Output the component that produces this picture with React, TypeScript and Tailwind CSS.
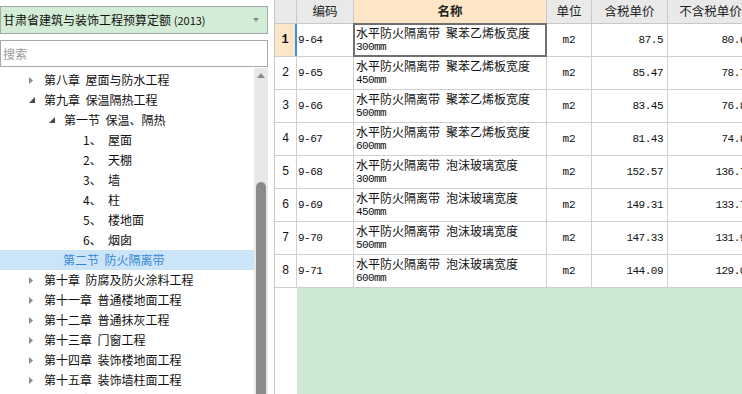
import React from 'react';

const cjk = '[font-family:"Noto_Sans_CJK_SC","Noto_Sans",sans-serif]';
const mono = '[font-family:"Liberation_Mono","DejaVu_Sans_Mono",monospace]';

type TreeItem = {
  level: 0 | 1 | 2;
  text: string;
  num?: string;
  open?: boolean;
  leaf?: boolean;
  selected?: boolean;
};

const tree: TreeItem[] = [
  { level: 0, text: '第八章  屋面与防水工程' },
  { level: 0, text: '第九章  保温隔热工程', open: true },
  { level: 1, text: '第一节  保温、隔热', open: true },
  { level: 2, num: '1', text: '屋面' },
  { level: 2, num: '2', text: '天棚' },
  { level: 2, num: '3', text: '墙' },
  { level: 2, num: '4', text: '柱' },
  { level: 2, num: '5', text: '楼地面' },
  { level: 2, num: '6', text: '烟囱' },
  { level: 1, text: '第二节  防火隔离带', leaf: true, selected: true },
  { level: 0, text: '第十章  防腐及防火涂料工程' },
  { level: 0, text: '第十一章  普通楼地面工程' },
  { level: 0, text: '第十二章  普通抹灰工程' },
  { level: 0, text: '第十三章  门窗工程' },
  { level: 0, text: '第十四章  装饰楼地面工程' },
  { level: 0, text: '第十五章  装饰墙柱面工程' },
  { level: 0, text: '第十六章  装饰天棚工程' },
];

const rows = [
  { code: '9-64', spec: '聚苯乙烯板宽度', w: '300mm', tax: '87.5', net: '80.61' },
  { code: '9-65', spec: '聚苯乙烯板宽度', w: '450mm', tax: '85.47', net: '78.72' },
  { code: '9-66', spec: '聚苯乙烯板宽度', w: '500mm', tax: '83.45', net: '76.83' },
  { code: '9-67', spec: '聚苯乙烯板宽度', w: '600mm', tax: '81.43', net: '74.84' },
  { code: '9-68', spec: '泡沫玻璃宽度', w: '300mm', tax: '152.57', net: '136.75' },
  { code: '9-69', spec: '泡沫玻璃宽度', w: '450mm', tax: '149.31', net: '133.73' },
  { code: '9-70', spec: '泡沫玻璃宽度', w: '500mm', tax: '147.33', net: '131.92' },
  { code: '9-71', spec: '泡沫玻璃宽度', w: '600mm', tax: '144.09', net: '129.04' },
];

const Caret: React.FC<{ open?: boolean }> = ({ open }) =>
  open ? (
    <svg width="6" height="6" viewBox="0 0 6 6">
      <path d="M6 0 L6 6 L0 6 Z" fill="#4a4a4a" />
    </svg>
  ) : (
    <svg width="4" height="7" viewBox="0 0 4 7">
      <path d="M0 0 L4 3.5 L0 7 Z" fill="#8c8c8c" />
    </svg>
  );

const TreeRow: React.FC<{ item: TreeItem }> = ({ item }) => {
  if (item.selected) {
    return (
      <div className="flex h-5 items-center whitespace-pre bg-[#cce4f7] pl-[63px] text-[#3a87d8]">{item.text}</div>
    );
  }
  if (item.level === 2) {
    return (
      <div className="flex h-5 items-center whitespace-pre pl-[83px] text-[#111]">
        <span className="w-[25px]">{item.num}、</span>
        <span>{item.text}</span>
      </div>
    );
  }
  const pad = item.level === 0 ? 'pl-[29px]' : 'pl-[49px]';
  return (
    <div className={`flex h-5 items-center whitespace-pre text-[#111] ${pad}`}>
      <span className="flex w-[15px] items-center">{!item.leaf && <Caret open={item.open} />}</span>
      <span>{item.text}</span>
    </div>
  );
};

const TreePanel: React.FC = () => (
  <div className="flex h-full w-[268px] flex-col">
    <div className="mt-[6px] flex h-[28px] items-center justify-between border border-[#a9a9a9] bg-[#d3ecd5] pl-[2px] pr-[8px]">
      <span className="whitespace-nowrap text-[12px] text-[#111]">
        甘肃省建筑与装饰工程预算定额 <span className="text-[11px]">(2013)</span>
      </span>
      <svg width="6" height="4" viewBox="0 0 6 4">
        <path d="M0 0 L6 0 L3 4 Z" fill="#8a8a8a" />
      </svg>
    </div>
    <div className="mt-[6px] flex h-[27px] items-center border border-[#a9a9a9] bg-white pl-[2px] text-[12px] text-[#9a9a9a]">
      搜索
    </div>
    <div className="mt-px flex min-h-0 flex-1">
      <div className="flex-1 overflow-hidden pt-[2px] text-[12px]">
        {tree.map((t, i) => (
          <TreeRow key={i} item={t} />
        ))}
      </div>
      <div className="flex w-[14px] flex-col items-center bg-[#e8e8e8]">
        <svg className="mt-[5px]" width="8" height="5" viewBox="0 0 8 5">
          <path d="M0 5 L4 0 L8 5 Z" fill="#8a8a8a" />
        </svg>
        <div className="mt-[104px] w-[10px] flex-1 rounded-t-full bg-[#8b8b8b]" />
      </div>
    </div>
  </div>
);

const HeadCell: React.FC<{ w: string; bold?: boolean; active?: boolean; children?: React.ReactNode }> = ({
  w,
  bold,
  active,
  children,
}) => (
  <div
    className={`flex h-full shrink-0 items-center justify-center border-r border-[#c9c9c9] text-[12.5px] text-[#222] ${w} ${
      active ? 'bg-[#fde5c6]' : 'bg-[#e9e9e9]'
    } ${bold ? 'font-bold' : ''}`}
  >
    {children}
  </div>
);

const Grid: React.FC = () => (
  <div className="ml-[6px] flex h-full flex-1 flex-col overflow-hidden border-l border-[#c4c4c4]">
    <div className="flex h-[24px] w-[600px] shrink-0 border-b border-[#c9c9c9]">
      <HeadCell w="w-[22px]" />
      <HeadCell w="w-[57px]">编码</HeadCell>
      <HeadCell w="w-[193px]" bold active>
        名称
      </HeadCell>
      <HeadCell w="w-[45px]">单位</HeadCell>
      <HeadCell w="w-[76px]">含税单价</HeadCell>
      <HeadCell w="w-[90px]">
        <span className="mr-[4px]">不含税单价</span>
      </HeadCell>
    </div>
    {rows.map((r, i) => {
      const first = i === 0;
      return (
        <div key={r.code} className="flex h-[33px] w-[600px] shrink-0 border-b border-[#cfcfcf] text-[#111]">
          <div
            className={`flex w-[22px] shrink-0 items-center justify-center text-[12px] ${mono} ${
              first ? 'border-r-2 border-[#3a8ee6] bg-[#fde6c8] font-bold' : 'border-r border-[#cfcfcf]'
            }`}
          >
            {i + 1}
          </div>
          <div className={`flex w-[57px] shrink-0 items-center border-r border-[#cfcfcf] pl-[1px] text-[11px] tracking-[-0.5px] ${mono}`}>
            {r.code}
          </div>
          <div className="relative flex w-[193px] shrink-0 flex-col border-r border-[#cfcfcf] pl-[2px] pt-px">
            <span className="h-[15px] whitespace-pre text-[12px] leading-[15px]">
              {'水平防火隔离带\u2002' + r.spec}
            </span>
            <span className={`h-[14px] text-[11px] leading-[14px] tracking-[-0.6px] ${mono}`}>{r.w}</span>
            {first && <div className="absolute -left-px -top-px -right-px -bottom-px border-2 border-[#707070]" />}
          </div>
          <div className={`flex w-[45px] shrink-0 items-center justify-center border-r border-[#cfcfcf] pt-px text-[11px] ${mono}`}>
            m2
          </div>
          <div className={`flex w-[76px] shrink-0 items-center justify-end border-r border-[#cfcfcf] pr-[4px] pt-px text-[11px] tracking-[-0.5px] ${mono}`}>
            {r.tax}
          </div>
          <div className={`flex w-[88px] shrink-0 items-center justify-end pr-[4px] pt-px text-[11px] tracking-[-0.5px] ${mono}`}>
            {r.net}
          </div>
        </div>
      );
    })}
    <div className="flex min-h-0 flex-1">
      <div className="w-[22px] shrink-0 bg-white" />
      <div className="flex-1 bg-[#cde8d0]" />
    </div>
  </div>
);

const App: React.FC = () => (
  <div className={`flex h-[394px] w-[742px] overflow-hidden bg-white ${cjk}`}>
    <TreePanel />
    <Grid />
  </div>
);

export default App;
